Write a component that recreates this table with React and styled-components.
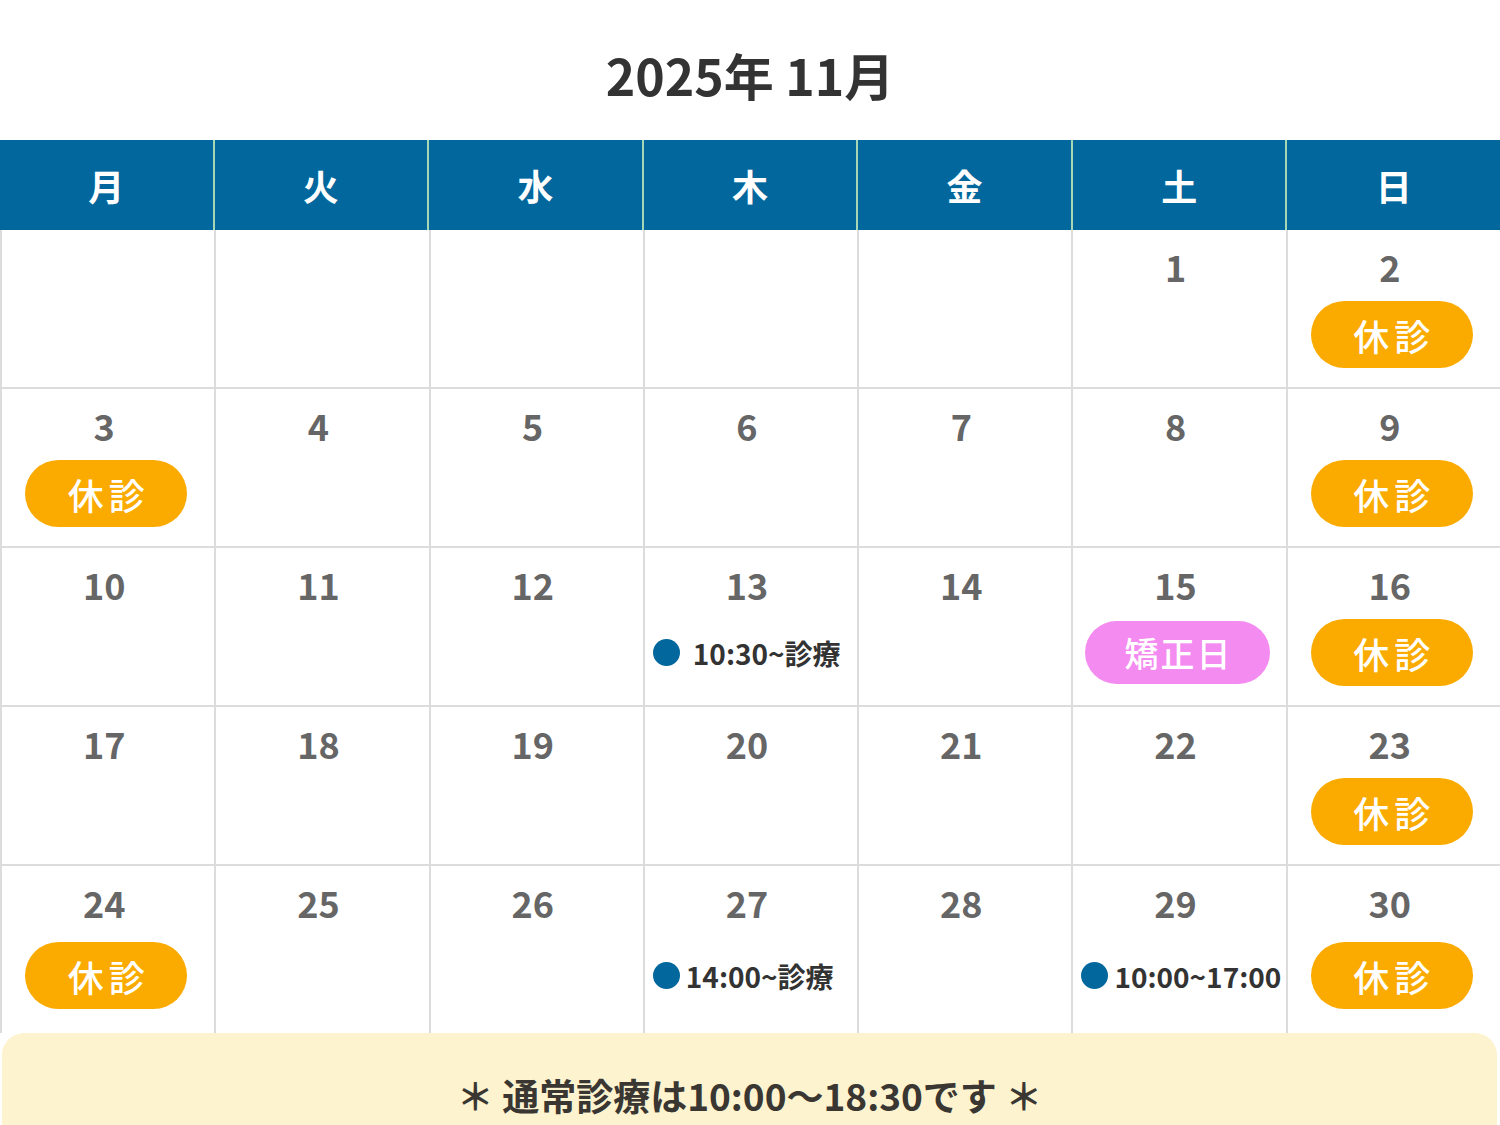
import React from "react";
import styled, { createGlobalStyle } from "styled-components";

const GlobalStyle = createGlobalStyle`
    * { box-sizing: border-box; }
    body {
        margin: 0;
        background-color: #ffffff;
        font-family: "Noto Sans CJK JP", "Noto Sans", sans-serif;
    }
`;

const WEEK = ["月", "火", "水", "木", "金", "土", "日"];

// kind: off = 休診, ortho = 矯正日, time = 時間帯
const DAYS = [
    null, null, null, null, null,
    { d: 1 }, { d: 2, kind: "off" },
    { d: 3, kind: "off" }, { d: 4 }, { d: 5 }, { d: 6 }, { d: 7 }, { d: 8 }, { d: 9, kind: "off" },
    { d: 10 }, { d: 11 }, { d: 12 }, { d: 13, kind: "time", text: "10:30~診療", wide: true }, { d: 14 }, { d: 15, kind: "ortho" }, { d: 16, kind: "off" },
    { d: 17 }, { d: 18 }, { d: 19 }, { d: 20 }, { d: 21 }, { d: 22 }, { d: 23, kind: "off" },
    { d: 24, kind: "off" }, { d: 25 }, { d: 26 }, { d: 27, kind: "time", text: "14:00~診療" }, { d: 28 }, { d: 29, kind: "time", text: "10:00~17:00" }, { d: 30, kind: "off" },
];

const Page = styled.div`
    width: 1500px;
    height: 1125px;
    overflow: hidden;
    display: flex;
    flex-direction: column;
`;

const Title = styled.h1`
    margin: 0;
    padding: 44px 0 36px 0;
    text-align: center;
    font-size: 50px;
    line-height: 60px;
    font-weight: 700;
    color: #333333;
`;

const HeadRow = styled.div`
    display: grid;
    grid-template-columns: repeat(7, 1fr);
    column-gap: 2px;
    height: 90px;
    background-color: #a6d7b4;
`;

const HeadCell = styled.div`
    background-color: #02679d;
    color: #ffffff;
    display: flex;
    align-items: center;
    justify-content: center;
    font-size: 36px;
    font-weight: 700;
`;

const Body = styled.div`
    display: grid;
    grid-template-columns: repeat(7, 1fr);
    grid-template-rows: repeat(4, 157px) 167px;
    gap: 2px;
    border-left: 2px solid #dcdcdc;
    background-color: #dcdcdc;
`;

const Cell = styled.div`
    background-color: #ffffff;
    display: flex;
    flex-direction: column;
    padding: 14px 0 8px 0;
    min-width: 0;
`;

const DayNum = styled.div`
    height: 46px;
    line-height: 44px;
    text-align: center;
    padding-right: 8px;
    font-size: 36px;
    font-weight: 700;
    color: #666666;
`;

const Slot = styled.div`
    flex: 1;
    display: flex;
    align-items: center;
    justify-content: ${({ left }) => (left ? "flex-start" : "center")};
    padding-left: ${({ left }) => (left ? "8px" : "0")};
`;

const Pill = styled.div`
    display: flex;
    align-items: center;
    justify-content: center;
    width: ${({ ortho }) => (ortho ? "185px" : "162px")};
    height: ${({ ortho }) => (ortho ? "63px" : "67px")};
    border-radius: 34px;
    background-color: ${({ ortho }) => (ortho ? "#f48bf0" : "#fbab00")};
    color: #ffffff;
    font-size: ${({ ortho }) => (ortho ? "34px" : "36px")};
    font-weight: 500;
    letter-spacing: ${({ ortho }) => (ortho ? "2px" : "5px")};
    padding-left: ${({ ortho }) => (ortho ? "2px" : "5px")};
    margin-right: 4px;
`;

const Event = styled.div`
    display: flex;
    align-items: center;
    gap: ${({ wide }) => (wide ? "13px" : "6px")};
    white-space: nowrap;
    font-size: 28px;
    font-weight: 700;
    color: #333333;
`;

const Dot = styled.span`
    width: 27px;
    height: 27px;
    border-radius: 50%;
    background-color: #02679d;
    flex-shrink: 0;
`;

const Note = styled.div`
    margin: 0 3px 0 2px;
    flex: 1;
    background-color: #fdf3cf;
    border-radius: 22px 22px 0 0;
    display: flex;
    justify-content: center;
    padding-top: 38px;
    font-size: 37px;
    line-height: 48px;
    font-weight: 700;
    color: #3a3733;
`;

const DayCell = ({ day }) => {
    if (!day) return <Cell />;
    return (
        <Cell>
            <DayNum>{day.d}</DayNum>
            <Slot left={day.kind === "time"}>
                {day.kind === "off" && <Pill>休診</Pill>}
                {day.kind === "ortho" && <Pill ortho>矯正日</Pill>}
                {day.kind === "time" && (
                    <Event wide={day.wide}><Dot />{day.text}</Event>
                )}
            </Slot>
        </Cell>
    );
};

const App = () => {
    return (
        <>
            <GlobalStyle />
            <Page>
                <Title>2025年 11月</Title>
                <HeadRow>
                    {WEEK.map((w) => <HeadCell key={w}>{w}</HeadCell>)}
                </HeadRow>
                <Body>
                    {DAYS.map((day, i) => <DayCell key={i} day={day} />)}
                </Body>
                <Note>＊ 通常診療は10:00〜18:30です ＊</Note>
            </Page>
        </>
    );
};

export default App;
